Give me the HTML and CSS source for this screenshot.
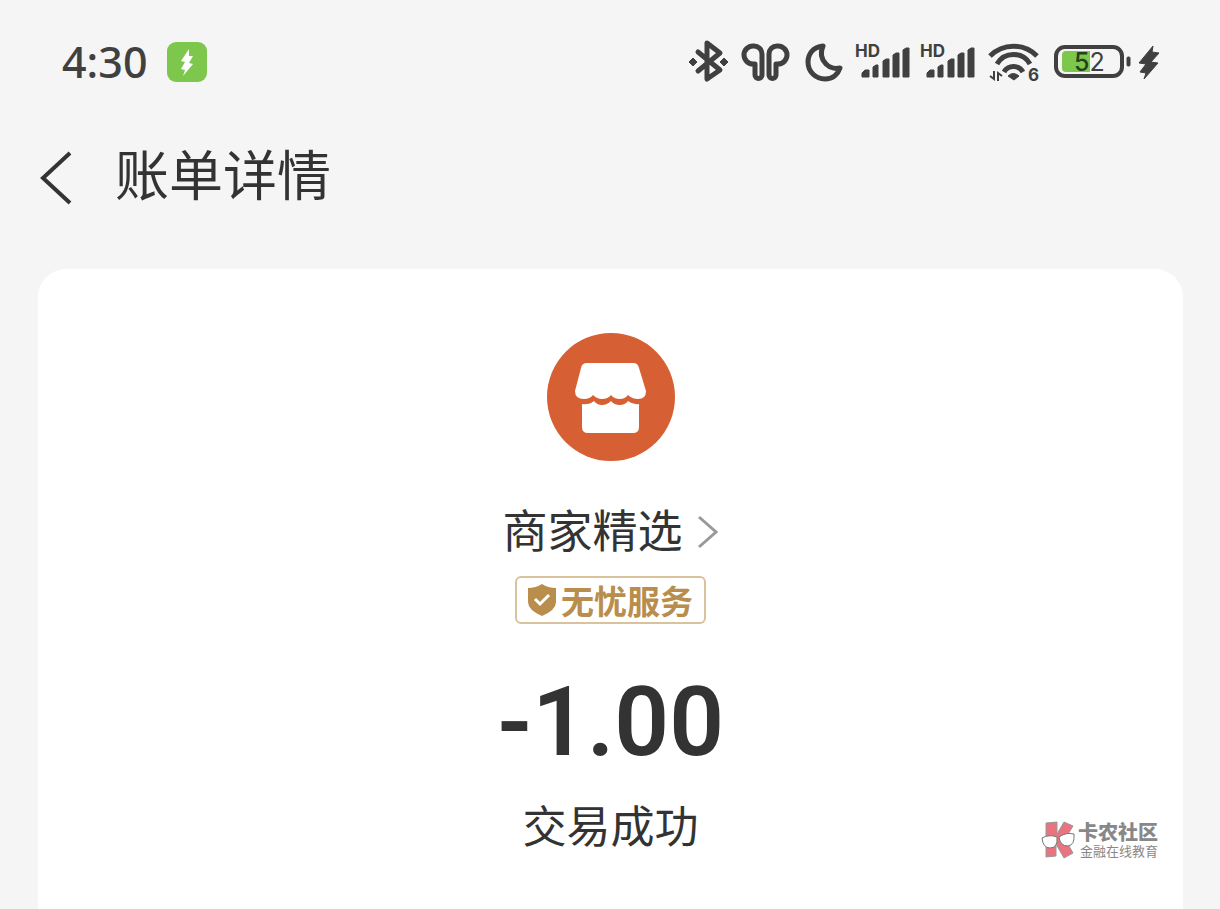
FILE: index.html
```html
<!DOCTYPE html>
<html lang="zh-CN">
<head>
  <meta charset="UTF-8">
  <meta name="viewport" content="width=device-width, initial-scale=1.0">
  <title>账单详情</title>
  <link rel="stylesheet" href="styles.css">
</head>
<body>
  <div class="status-bar">
    <span class="clock">4:30</span>
    <svg class="app-icon" width="40" height="40" viewBox="0 0 40 40">
      <rect width="40" height="40" rx="9" fill="#7cc74c"/>
      <path d="M22 7L14 19l4 1-4 7 4 1-2 6 10-12-4-1 4-7h-4z" fill="#fff"/>
    </svg>
    <div class="status-icons">
      <!-- bluetooth -->
      <svg width="44" height="44" viewBox="0 0 44 44">
        <path class="line thick" d="M11 12L33 30 20 39V3L33 13 11 31"/>
        <path class="solid" d="M2 22l4-4 4 4-4 4zM33 22l4-4 4 4-4 4z"/>
      </svg>
      <!-- earbuds -->
      <svg width="50" height="44" viewBox="0 0 50 44">
        <path class="line thick" d="M21 14V35a3.500 3.500 0 0 1-7 0V24h-2a9 9 0 0 1 0-18h1a8 8 0 0 1 8 8z"/>
        <path class="line thick" d="M28 14V35a3.500 3.500 0 0 0 7 0V24h2a9 9 0 0 0 0-18h-1a8 8 0 0 0-8 8z"/>
      </svg>
      <!-- do not disturb -->
      <svg width="44" height="44" viewBox="0 0 44 44">
        <path class="line thick" d="M22 6C12 7 7 14 7 22c0 10 8 17 17 17 8 0 13-5 15-11-4 1-10 0-14-4-5-5-6-11-3-18z"/>
      </svg>
      <svg width="55" height="44" viewBox="0 0 55 44">
        <text class="hd" x="0" y="17">HD</text>
        <path class="solid" d="M7 37v-4l3-3h4v7zM18 37V27l3-2h2v12zM28 37V21l3-2h3v18zM38 37V15l3-2h3v24zM48 37V10l3-2h3v29z"/>
      </svg>
      <svg width="55" height="44" viewBox="0 0 55 44">
        <text class="hd" x="0" y="17">HD</text>
        <path class="solid" d="M7 37v-4l3-3h4v7zM18 37V27l3-2h2v12zM28 37V21l3-2h3v18zM38 37V15l3-2h3v24zM48 37V10l3-2h3v29z"/>
      </svg>
      <!-- wifi -->
      <svg width="58" height="44" viewBox="0 0 58 44">
        <path class="line thick flat" d="M5 16A33 33 0 0 1 52 16M12 24A19 19 0 0 1 45 24M19 32A11 11 0 0 1 38 32"/>
        <path class="solid" d="M23 36q5-5 11 0l-5 4z"/>
        <path class="arrows" d="M9 31v8l-4-3M13 41v-8l4 3"/>
        <text class="wifi-gen" x="43" y="41">6</text>
      </svg>
      <!-- battery -->
      <svg width="75" height="44" viewBox="0 0 75 44">
        <rect class="line" x="3" y="7" width="66" height="29" rx="9"/>
        <path d="M37 11H13q-4 0-4 4v13q0 4 4 4h24z" fill="#7cc74c"/>
        <rect class="solid" x="74" y="17" width="3" height="9" rx="1"/>
        <text class="battery-level" x="21" y="31"><tspan class="on-charge">5</tspan>2</text>
      </svg>
      <!-- charging -->
      <svg width="22" height="44" viewBox="0 0 22 44">
        <path class="solid" d="M15 6L1 23l7 1-6 8 6 1-2 6L20 23l-7-1 8-9-7-1z"/>
      </svg>
    </div>
  </div>

  <header class="nav">
    <button class="back" type="button" aria-label="返回">
      <svg width="34" height="54" viewBox="0 0 34 54"><path d="M31 2L4 27 31 52"/></svg>
    </button>
    <h1>账单详情</h1>
  </header>

  <main class="bill">
    <svg class="shop" width="128" height="128" viewBox="0 0 128 128">
      <circle cx="64" cy="64" r="64" fill="#d65f33"/>
      <path d="M41 30H86q5 0 6 5l7 23q0 8-8 8-6 0-10-4-3 4-8 4-6 0-9-4-3 4-9 4-5 0-9-4-3 4-9 4-9 0-9-8l6-23q1-5 6-5z" fill="#fff"/>
      <path d="M35 71q7 1 12-3 3 4 8 4t9-4q3 4 9 4 5 0 8-4 5 4 11 3V94q0 6-6 6H41q-6 0-6-6z" fill="#fff"/>
    </svg>
    <a class="merchant" href="#">
      商家精选
      <svg width="22" height="32" viewBox="0 0 22 32"><path d="M2 1L19 16 2 31"/></svg>
    </a>
    <div class="badge">
      <svg width="28" height="32" viewBox="0 0 28 32">
        <path d="M14 0q6 4 14 4v14q0 8-14 14Q0 26 0 18V4q8 0 14-4z" fill="#b98d4c"/>
        <path d="M7 15l5 5 9-9" fill="none" stroke="#fff" stroke-width="3"/>
      </svg>
      <span>无忧服务</span>
    </div>
    <p class="amount">-1.00</p>
    <p class="result">交易成功</p>
  </main>

  <div class="watermark">
    <svg width="36" height="38" viewBox="0 0 36 38">
      <path d="M5 2l11-1v12l7-12 9 4-8 13 8 14-9 5-8-14v12l-10 1z" fill="#ea7380" stroke="#999" stroke-width="1"/>
      <path d="M1 17q7-4 15-1 1 11-7 11-7 0-8-10zM18 16q7-5 15-3 1 11-6 12-8 0-9-9z" fill="#fff" stroke="#777" stroke-width="1"/>
    </svg>
    <div>
      <strong>卡农社区</strong>
      <span>金融在线教育</span>
    </div>
  </div>
</body>
</html>
```
FILE: styles.css
```css
* {
  box-sizing: border-box;
}
body {
  margin: 0;
  min-height: 100vh;
  display: flex;
  flex-direction: column;
  background: #f5f5f5;
  color: #333;
  font-family: "Noto Sans CJK SC", sans-serif;
}
h1, p {
  margin: 0;
  font-weight: 400;
}
svg {
  display: block;
  flex: none;
  overflow: visible;
}

/* status bar */
.status-bar {
  display: flex;
  align-items: center;
  height: 124px;
  padding: 0 60px 0 62px;
}
.clock {
  margin-right: 20px;
  color: #404040;
  font: 500 43px/44px "Noto Sans", sans-serif;
}
.status-icons {
  display: flex;
  gap: 10px;
  margin-left: auto;
}
.line {
  fill: none;
  stroke: #404040;
  stroke-width: 4;
  stroke-linejoin: round;
  stroke-linecap: round;
}
.thick {
  stroke-width: 5;
}
.flat {
  stroke-linecap: butt;
}
.solid {
  fill: #404040;
  stroke: #404040;
  stroke-width: 1;
  stroke-linejoin: round;
}
.arrows {
  fill: none;
  stroke: #404040;
  stroke-width: 2;
}
.hd, .wifi-gen {
  fill: #404040;
  font: 700 17px Inter, sans-serif;
}
.battery-level {
  fill: #404040;
  font: 400 25px Inter, sans-serif;
}
.on-charge {
  fill: #25431a;
  font-weight: 500;
}

/* title */
.nav {
  display: flex;
  align-items: center;
  height: 108px;
  padding-left: 39px;
  gap: 42px;
}
.back {
  padding: 0;
  border: 0;
  background: none;
}
.back path {
  fill: none;
  stroke: #333;
  stroke-width: 4;
}
h1 {
  padding-bottom: 10px;
  font-size: 54px;
  line-height: 64px;
}

/* bill card */
.bill {
  flex: 1;
  display: flex;
  flex-direction: column;
  align-items: center;
  margin: 37px 37px 0 38px;
  padding-top: 64px;
  border-radius: 28px 28px 0 0;
  background: #fff;
}
.merchant {
  display: flex;
  align-items: center;
  gap: 14px;
  margin-top: 38px;
  color: #333;
  font-size: 45px;
  line-height: 60px;
  text-decoration: none;
}
.merchant svg {
  margin-top: 6px;
}
.merchant path {
  fill: none;
  stroke: #999;
  stroke-width: 3;
}
.badge {
  display: flex;
  align-items: center;
  gap: 5px;
  height: 48px;
  margin-top: 17px;
  padding: 0 11px;
  border: 2px solid #d8c39c;
  border-radius: 6px;
  color: #b98d4c;
  font-size: 33px;
  font-weight: 700;
  line-height: 44px;
}
.amount {
  margin-top: 38px;
  font: 600 96px/120px Roboto, sans-serif;
}
.result {
  margin-top: 10px;
  font-size: 44px;
  line-height: 64px;
}

/* watermark lies over the card */
.watermark {
  position: absolute;
  right: 62px;
  bottom: 50px;
  display: flex;
  align-items: center;
  gap: 1px;
  color: #888;
}
.watermark div {
  display: flex;
  flex-direction: column;
}
.watermark strong {
  font-size: 20px;
  font-weight: 900;
  line-height: 22px;
}
.watermark span {
  padding-left: 2px;
  font-size: 13px;
  line-height: 16px;
}
```
